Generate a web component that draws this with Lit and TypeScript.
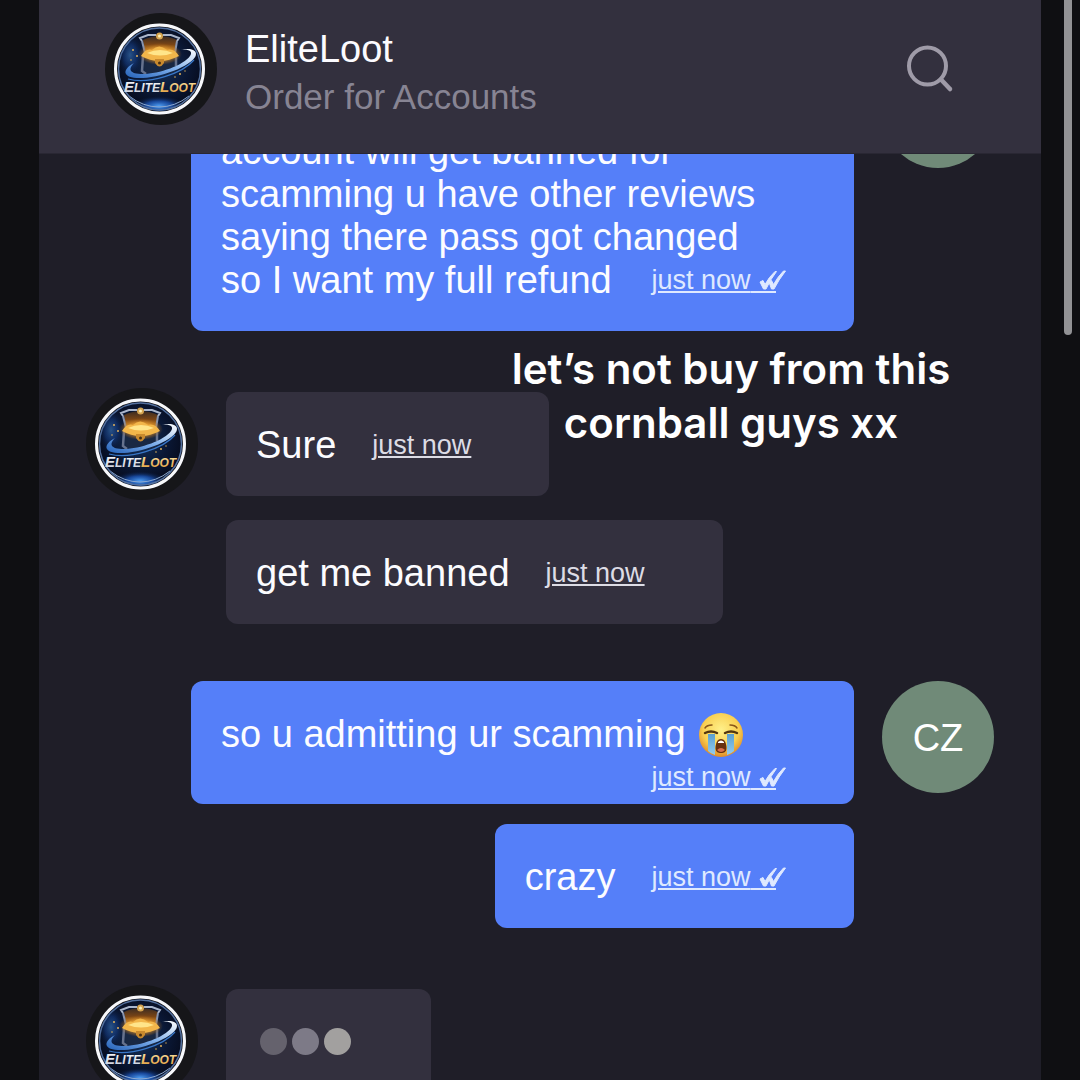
import { LitElement, html, svg, css, nothing } from "lit";
import { customElement, property } from "lit/decorators.js";

interface Message {
  from: "seller" | "buyer";
  lines: string[];
  avatar?: boolean;
  initials?: string;
  crying?: boolean;
  wide?: boolean;
  group?: boolean;
  cut?: boolean;
}

const MESSAGES: Message[] = [
  {
    from: "buyer",
    avatar: true,
    wide: true,
    cut: true,
    lines: [
      "account will get banned for",
      "scamming u have other reviews",
      "saying there pass got changed",
      "so I want my full refund",
    ],
  },
  { from: "seller", avatar: true, group: true, lines: ["Sure"] },
  { from: "seller", lines: ["get me banned"] },
  {
    from: "buyer",
    avatar: true,
    initials: "CZ",
    group: true,
    wide: true,
    crying: true,
    lines: ["so u admitting ur scamming"],
  },
  { from: "buyer", lines: ["crazy"] },
];

@customElement("shop-avatar")
class ShopAvatar extends LitElement {
  static styles = css`
    :host { display: block; flex: none; width: 112px; height: 112px; }
    .art { display: block; width: 100%; height: 100%; }
    .word { font-family: "Liberation Sans", Arial, sans-serif; font-weight: 700; font-style: italic; font-size: 12px; }
    .cap { font-size: 15px; }
  `;

  render() {
    return html`<svg class="art" viewBox="0 0 112 112" role="img" aria-label="EliteLoot logo">
      ${svg`
      <defs>
        <radialGradient id="sky" cx="50%" cy="45%" r="55%">
          <stop offset="0" stop-color="#16345f"/><stop offset=".6" stop-color="#0a1734"/><stop offset="1" stop-color="#060b1c"/>
        </radialGradient>
        <radialGradient id="glow" cx="50%" cy="50%" r="50%">
          <stop offset="0" stop-color="#4fa0f5"/><stop offset=".5" stop-color="#1b53b4" stop-opacity=".8"/><stop offset="1" stop-color="#0a1a3c" stop-opacity="0"/>
        </radialGradient>
        <radialGradient id="shine" cx="50%" cy="50%" r="50%">
          <stop offset="0" stop-color="#fff3b0"/><stop offset=".45" stop-color="#f0a93a"/><stop offset="1" stop-color="#a85f12" stop-opacity="0"/>
        </radialGradient>
        <linearGradient id="lid" x1="0" y1="0" x2="0" y2="1">
          <stop offset="0" stop-color="#3a2b22"/><stop offset=".5" stop-color="#7a4515"/><stop offset="1" stop-color="#e39a2e"/>
        </linearGradient>
        <linearGradient id="orbit" x1="0" y1="1" x2="1" y2="0">
          <stop offset="0" stop-color="#2461b8"/><stop offset=".5" stop-color="#7fb0ec"/><stop offset="1" stop-color="#ffffff"/>
        </linearGradient>
        <linearGradient id="silver" x1="0" y1="0" x2="0" y2="1">
          <stop offset="0" stop-color="#ffffff"/><stop offset="1" stop-color="#c6cddb"/>
        </linearGradient>
        <linearGradient id="gold" x1="0" y1="0" x2="0" y2="1">
          <stop offset="0" stop-color="#fff0b8"/><stop offset="1" stop-color="#e09a35"/>
        </linearGradient>
        <clipPath id="disc"><circle cx="54.5" cy="56" r="42"/></clipPath>
      </defs>
      <circle cx="56" cy="56" r="56" fill="#161619"/>
      <circle cx="54.5" cy="56" r="42" fill="url(#sky)"/>
      <g clip-path="url(#disc)">
        <ellipse cx="54" cy="93" rx="27" ry="10" fill="url(#glow)"/>
        <ellipse cx="25" cy="42" rx="13" ry="22" fill="url(#glow)" opacity=".45"/>
        <path d="M24 83 Q38 94 54 94 Q70 94 84 83" fill="none" stroke="#8da9d0" stroke-width="1"/>
        <g fill="#e2b25a">
          <circle cx="28" cy="37" r="1"/><circle cx="32" cy="43" r="1"/><circle cx="26" cy="47" r=".8"/>
          <circle cx="75" cy="61" r="1"/><circle cx="70" cy="64" r=".8"/><circle cx="80" cy="58" r=".7"/>
        </g>
      </g>
      <path d="M37 42 L73 42 L70 60 L40 60Z" fill="#192843"/>
      <path d="M38 27 Q54.500 19 72 27 L70 40 L40 40Z" fill="url(#lid)"/>
      <path d="M37 28 L35 25 L43 22 L51 22 M58 22 L66 22 L74 25 L72 28" fill="none" stroke="#aab6cc" stroke-width="2"/>
      <path d="M37 28 L40 40 M72 28 L70 40" stroke="#8894ae" stroke-width="2"/>
      <path d="M38 43 L37 58 L41 61 M71 43 L71 53" stroke="#66728d" stroke-width="2.500" fill="none"/>
      <ellipse cx="55" cy="41" rx="22" ry="11" fill="url(#shine)"/>
      <path d="M36 43 Q41 35 47 37 Q54 30 62 37 Q69 35 74 43 Q64 48 55 48 Q45 48 36 43Z" fill="#f2b64a"/>
      <path d="M42 40 Q55 34 68 40 Q55 45 42 40Z" fill="#ffe58a"/>
      <circle cx="54.500" cy="23" r="3.500" fill="#d5a450"/><circle cx="54.500" cy="23" r="1.500" fill="#fff0b5"/>
      <path d="M50 46 H59 V50 Q54.500 57 50 50Z" fill="#c98a2e"/><circle cx="54.500" cy="50" r="1.500" fill="#493012"/>
      <path d="M29 50 C16 57 17 66 38 65 C59 64 91 51 91 41 C91 36 83 35 76 37 C85 36 88 39 85 43 C79 52 54 61 38 61 C24 61 23 56 29 50Z" fill="url(#orbit)"/>
      <path d="M23 66 C44 72 78 60 89 47" fill="none" stroke="#3978c9" stroke-width="1.200"/>
      <circle cx="54.500" cy="56" r="44" fill="none" stroke="#f7f8fb" stroke-width="3"/>
      <circle cx="54.500" cy="56" r="41" fill="none" stroke="#54719f" stroke-width="1.500"/>
      <text class="word" x="19" y="79"><tspan class="cap" fill="url(#silver)">E</tspan><tspan fill="url(#silver)">LITE</tspan><tspan class="cap" fill="url(#gold)">L</tspan><tspan fill="url(#gold)">OOT</tspan></text>
      `}
    </svg>`;
  }
}

@customElement("chat-message")
class ChatMessage extends LitElement {
  @property({ attribute: false }) message!: Message;

  static styles = css`
    :host { display: block; }
    .row { display: flex; align-items: center; gap: 28px; }
    .buyer { align-items: flex-start; justify-content: flex-end; }
    .gutter { flex: none; width: 112px; }
    .initials {
      display: grid; place-items: center; flex: none; box-sizing: border-box; width: 112px; height: 112px;
      padding-top: 2px; border-radius: 50%; background: #708a78; color: #fff; font-size: 38px;
    }
    .bubble {
      display: flex; flex-direction: column; justify-content: flex-end; box-sizing: border-box;
      padding: 32px 78px 29px 30px; border-radius: 12px; background: #33303e;
      color: #fcfcff; font-size: 38px; line-height: 43px;
    }
    .buyer .bubble { background: #557ff9; padding-right: 68px; }
    .buyer .wide { flex: 0 1 663px; }
    .cut { min-height: 275px; }
    .buyer .stacked { padding-bottom: 5px; }
    .line { display: flex; align-items: center; justify-content: space-between; gap: 36px; white-space: nowrap; }
    .line.end { justify-content: flex-end; }
    .line.with-face { justify-content: flex-start; gap: 12px; }
    .face { flex: none; width: 46px; height: 46px; margin: -2px 0; }
    .time {
      color: #dddce5; font-size: 27px; text-decoration: underline;
      text-decoration-thickness: 2px; text-underline-offset: 2px;
    }
    .buyer .time { color: #dfe9ff; }
    .ticks { width: 28px; height: 26px; vertical-align: -6px; }
  `;

  private time(read: boolean) {
    return html`<a class="time" href="#">just now${read
      ? html`&nbsp;<svg class="ticks" viewBox="0 0 28 26" role="img" aria-label="Read">
          <path d="M0 22H18V24H0Z" fill="currentColor" />
          <g fill="currentColor" stroke="currentColor" stroke-width="1" stroke-linejoin="round">
            <path d="M2 13 L5 11.500 L7 15.500 Q11 8 17 2.500 L18.500 2.500 Q12 11 8 20 L5.500 20Z" />
            <path d="M11 13 L13.500 11.500 L15.500 15.500 Q19.500 8 25.500 2 L27.500 2 Q20.500 11 16 20 L13.500 20Z" />
          </g>
        </svg>`
      : nothing}</a>`;
  }

  private face() {
    return html`<svg class="face" viewBox="0 0 46 46" role="img" aria-label="loudly crying face">
      <defs>
        <radialGradient id="skin" cx="50%" cy="38%" r="62%">
          <stop offset="0" stop-color="#fff08a" /><stop offset=".65" stop-color="#f9cf51" /><stop offset="1" stop-color="#df8b28" />
        </radialGradient>
        <linearGradient id="tear" x1="0" y1="0" x2="0" y2="1">
          <stop offset="0" stop-color="#5c9fd0" /><stop offset="1" stop-color="#93cdf0" />
        </linearGradient>
      </defs>
      <circle cx="23" cy="23" r="22" fill="url(#skin)" />
      <path d="M10 22 H17 V43 Q12 41 10 39Z M29 22 H36 V39 Q34 41 29 43Z" fill="url(#tear)" />
      <path d="M7 16 Q9 13 14 13 M32 13 Q37 13 39 16" fill="none" stroke="#8a5718" stroke-width="1.500" stroke-linecap="round" />
      <path d="M7 21 Q13 18 19 21 M27 21 Q33 18 39 21" fill="none" stroke="#54360f" stroke-width="2.500" stroke-linecap="round" />
      <path d="M23 27 C27 27 28.500 32 28.500 36 C28.500 40 26 41 23 41 C20 41 17.500 40 17.500 36 C17.500 32 19 27 23 27Z" fill="#68310f" />
      <path d="M20 30 Q23 27 26 30 L26 31 H20Z" fill="#fff" />
      <path d="M19 38 Q23 34 27 38 Q25 40 23 40 Q21 40 19 38Z" fill="#d9704d" />
    </svg>`;
  }

  render() {
    const m = this.message;
    const buyer = m.from === "buyer";
    const last = m.lines.length - 1;
    const bubble = html`<div class="bubble ${m.wide ? "wide" : ""} ${m.cut ? "cut" : ""} ${m.crying ? "stacked" : ""}">
      ${m.lines.map((text, i) => {
        if (m.crying) {
          return html`<div class="line with-face"><span>${text}</span>${this.face()}</div>
            <div class="line end">${this.time(buyer)}</div>`;
        }
        return html`<div class="line"><span>${text}</span>${i === last ? this.time(buyer) : nothing}</div>`;
      })}
    </div>`;
    const gutter = html`<div class="gutter"></div>`;
    return buyer
      ? html`<div class="row buyer">${bubble}${m.avatar
          ? html`<div class="initials">${m.initials ?? nothing}</div>`
          : gutter}</div>`
      : html`<div class="row">${m.avatar ? html`<shop-avatar></shop-avatar>` : gutter}${bubble}</div>`;
  }
}

@customElement("app-root")
class AppRoot extends LitElement {
  static styles = css`
    :host {
      display: block; position: relative; height: 100vh; overflow: hidden; background: #0f0f12;
      font-family: "Liberation Sans", Arial, Helvetica, sans-serif;
    }
    .panel { display: flex; flex-direction: column; height: 100%; margin: 0 39px; background: #1f1e28; }
    .header {
      display: flex; align-items: flex-start; gap: 28px; flex: none;
      padding: 13px 87px 28px 66px; border-bottom: 1px solid #292733; background: #33303e;
    }
    .heading { flex: 1; padding-top: 12px; }
    .title, .subtitle { margin: 0; font-weight: 400; line-height: 48px; }
    .title { color: #fcfbff; font-size: 38px; }
    .subtitle { color: #878493; font-size: 35px; }
    .search { display: block; margin-top: 32px; padding: 0; border: 0; background: none; color: #9f9ba8; }
    .glass { display: block; width: 48px; height: 48px; }
    .list {
      display: flex; flex-direction: column; gap: 20px; flex: 1; min-height: 0;
      margin: 0; padding: 0 47px; overflow: hidden; list-style: none;
    }
    .item { flex: none; }
    .item:first-child { margin-top: -98px; }
    .group { margin-top: 37px; }
    .typing { display: flex; align-items: center; gap: 28px; }
    .dots {
      display: flex; align-items: center; gap: 5px; box-sizing: border-box; height: 104px;
      padding: 0 80px 0 34px; border-radius: 12px; background: #33303e;
    }
    .dot { width: 27px; height: 27px; border-radius: 50%; background: #65626d; }
    .dot:nth-child(2) { background: #7d7a87; }
    .dot:nth-child(3) { background: #a2a09f; }
    .caption {
      position: absolute; top: 342px; left: 481px; width: 500px; margin: 0; text-align: center;
      color: #fff; font: 600 42px/54px Inter, "Liberation Sans", sans-serif;
    }
    .scroll {
      position: absolute; top: -8px; right: 8px; width: 8px; height: 343px;
      border-radius: 4px; background: #929295;
    }
  `;

  render() {
    return html`
      <main class="panel">
        <header class="header">
          <shop-avatar></shop-avatar>
          <div class="heading">
            <h1 class="title">EliteLoot</h1>
            <p class="subtitle">Order for Accounts</p>
          </div>
          <button class="search" type="button" aria-label="Search">
            <svg class="glass" viewBox="0 0 48 48" fill="none" stroke="currentColor" stroke-linecap="round">
              <circle cx="21.500" cy="21" r="18.500" stroke-width="4" />
              <path d="M35 34.500 L44 44" stroke-width="4.500" />
            </svg>
          </button>
        </header>
        <ul class="list">
          ${MESSAGES.map(
            (m) => html`<li class="item ${m.group ? "group" : ""}"><chat-message .message=${m}></chat-message></li>`,
          )}
          <li class="item group typing">
            <shop-avatar></shop-avatar>
            <div class="dots" role="status" aria-label="Typing">
              <span class="dot"></span><span class="dot"></span><span class="dot"></span>
            </div>
          </li>
        </ul>
      </main>
      <p class="caption">let’s not buy from this<br />cornball guys xx</p>
      <div class="scroll"></div>
    `;
  }
}
